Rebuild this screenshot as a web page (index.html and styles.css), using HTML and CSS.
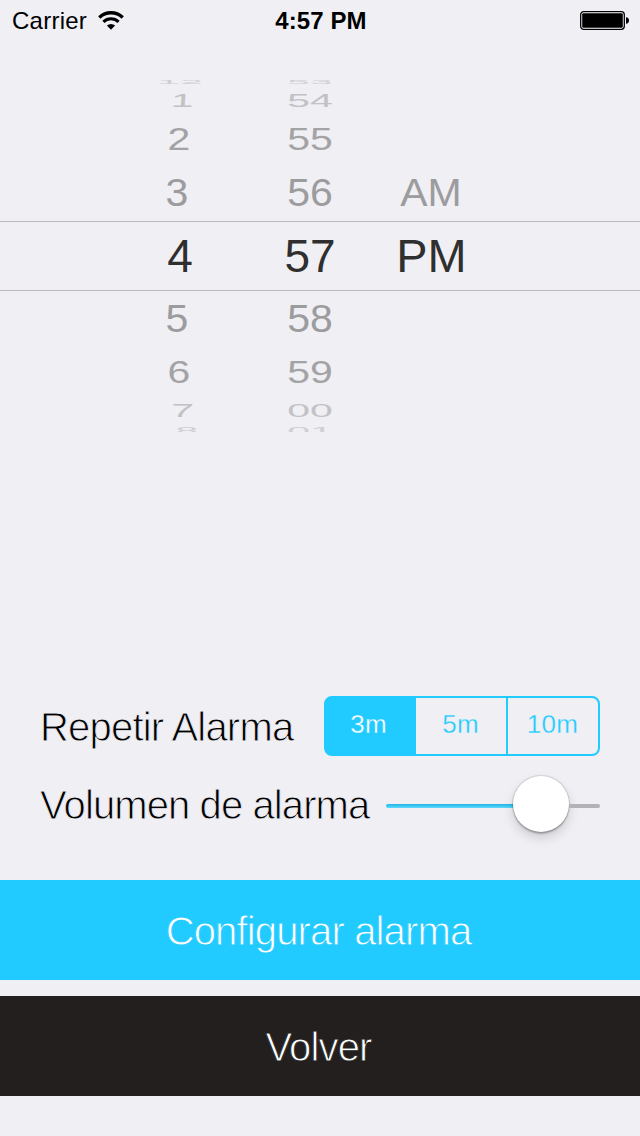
FILE: index.html
```html
<!DOCTYPE html>
<html lang="es">
  <head>
    <meta charset="UTF-8" />
    <meta name="viewport" content="width=device-width, initial-scale=1.0" />
    <title>Alarma</title>
    <link rel="stylesheet" href="styles.css">
  </head>
  <body>
    <header class="status-bar">
      <div class="carrier">
        <span>Carrier</span>
        <svg class="wifi" width="26" height="20" viewBox="0 0 26 20">
          <path d="M1.3 6.4a17 17 0 0 1 23.4 0" fill="none" stroke="#000" stroke-width="3.4" />
          <path d="M5.4 10.9a11 11 0 0 1 15.2 0" fill="none" stroke="#000" stroke-width="3" />
          <path d="M13 18.8L8.9 14.6a5.9 5.9 0 0 1 8.2 0z" />
        </svg>
      </div>
      <div class="clock">4:57 PM</div>
      <svg class="battery" width="50" height="20" viewBox="0 0 50 20">
        <rect x="0.7" y="0.7" width="43.6" height="17.6" rx="3" fill="#fff" stroke="#000" stroke-width="1.3" />
        <rect x="2.2" y="2.2" width="40.6" height="14.6" rx="1.2" />
        <path d="M46 6.2c4 0 4 6.6 0 6.6z" />
      </svg>
    </header>

    <main>
      <div class="picker">
        <div class="row far-top"><span>12</span><span>53</span><span></span></div>
        <div class="row third"><span>1</span><span>54</span><span></span></div>
        <div class="row second"><span>2</span><span>55</span><span></span></div>
        <div class="row first"><span>3</span><span>56</span><span>AM</span></div>
        <div class="row selected"><span>4</span><span>57</span><span>PM</span></div>
        <div class="row first below"><span>5</span><span>58</span><span></span></div>
        <div class="row second"><span>6</span><span>59</span><span></span></div>
        <div class="row third"><span>7</span><span>00</span><span></span></div>
        <div class="row far"><span>8</span><span>01</span><span></span></div>
      </div>

      <div class="settings">
        <div class="setting">
          <span class="label">Repetir Alarma</span>
          <div class="segmented">
            <button class="segment active">3m</button>
            <button class="segment">5m</button>
            <button class="segment">10m</button>
          </div>
        </div>
        <div class="setting">
          <span class="label volume-label">Volumen de alarma</span>
          <div class="slider">
            <div class="track-on"></div>
            <div class="knob"></div>
            <div class="track-off"></div>
          </div>
        </div>
      </div>

      <button class="action primary">Configurar alarma</button>
      <button class="action back">Volver</button>
    </main>
  </body>
</html>
```
FILE: styles.css
```css
body {
  margin: 0;
  height: 1136px;
  background-color: #efeff4;
  font-family: "Liberation Sans", Arial, sans-serif;
  color: #000;
  overflow: hidden;
}
button {
  margin: 0;
  padding: 0;
  border: none;
  font-family: inherit;
  cursor: pointer;
}
.status-bar {
  box-sizing: border-box;
  display: grid;
  grid-template-columns: 1fr auto 1fr;
  align-items: center;
  height: 40px;
  padding: 2px 10px 0 12px;
  font-size: 24px;
  line-height: 38px;
}
.carrier {
  display: flex;
  align-items: center;
  gap: 11px;
  letter-spacing: 0.25px;
}
.clock {
  font-weight: bold;
  letter-spacing: 0.1px;
}
.battery {
  justify-self: end;
}
/* time wheel */
.picker {
  height: 352px;
  margin-top: 40px;
  overflow: hidden;
}
.row {
  display: grid;
  grid-template-columns: 116px 144px 98px;
  justify-content: start;
  align-items: center;
  justify-items: center;
  padding-left: 122px;
  font-size: 41px;
  line-height: 46px;
  color: #9c9c9f;
}
.row span {
  min-height: 1px;
}
.selected {
  height: 68px;
  border-top: 1px solid #b9b9be;
  border-bottom: 1px solid #b9b9be;
  font-size: 46px;
  color: #2f2f2f;
}
.selected span:last-child {
  transform: scaleX(1.02);
}
.first {
  height: 55px;
}
.first span {
  transform: translate(0, -1px) scaleY(0.95);
}
.first span:first-child {
  transform: translate(-3px, -1px) scaleY(0.95);
}
.below span {
  transform: scaleY(0.95);
}
.below span:first-child {
  transform: translateX(-3px) scaleY(0.95);
}
.second {
  height: 53px;
  color: #a3a3a6;
}
.second span {
  transform: translateY(-1px) scaleY(0.76);
}
.second span:first-child {
  transform: translate(-1px, -1px) scaleY(0.76);
}
.third {
  height: 24px;
  color: #c2c2c6;
}
.third span {
  transform: scaleY(0.46);
}
.third span:first-child {
  transform: translateX(2px) skewX(-4deg) scaleY(0.46);
}
.far,
.far-top {
  height: 9px;
  color: #cfcfd3;
}
.far span {
  transform: translateY(3px) scaleY(0.26);
}
.far span:first-child {
  transform: translate(7px, 3px) scaleY(0.26);
}
.far-top span {
  transform: translateY(-3px) scaleY(0.15);
}
/* repeat and volume */
.settings {
  padding: 264px 40px 0;
}
.setting {
  display: flex;
  justify-content: space-between;
  align-items: center;
  height: 60px;
  margin-bottom: 20px;
}
/* the outline in the background colour thins the letters */
.label {
  padding-top: 2px;
  font-size: 40px;
  letter-spacing: -0.8px;
  white-space: nowrap;
  -webkit-text-stroke: 0.9px #efeff4;
}
.volume-label {
  padding: 0 0 2px;
  letter-spacing: -0.9px;
}
.segmented {
  box-sizing: border-box;
  display: grid;
  grid-template-columns: 90px 92px 90px;
  width: 276px;
  height: 60px;
  border: 2px solid #21cbff;
  border-radius: 8px;
  background-color: #21cbff;
  overflow: hidden;
}
.segment {
  background-color: #efeff4;
  color: #21cbff;
  font-size: 26px;
  letter-spacing: 0.3px;
  padding: 0 1px 4px 0;
  -webkit-text-stroke: 0.3px #efeff4;
}
.segment:nth-child(2) {
  border-right: 2px solid #21cbff;
}
.segment.active {
  padding-right: 5px;
  background-color: #21cbff;
  color: #fff;
  -webkit-text-stroke: 0.3px #21cbff;
}
.slider {
  display: flex;
  align-items: center;
  width: 214px;
}
.track-on {
  width: 127px;
  height: 4px;
  border-radius: 2px 0 0 2px;
  background: linear-gradient(#20b4e4, #5fd9ff);
}
.knob {
  width: 56px;
  height: 56px;
  margin-bottom: 4px;
  border-radius: 50%;
  background-color: #fff;
  box-shadow: 0 0 1px 1px rgba(0, 0, 0, 0.12), 0 2px 2px rgba(0, 0, 0, 0.22), 0 6px 12px rgba(0, 0, 0, 0.14);
}
.track-off {
  flex: 1;
  height: 4px;
  border-radius: 0 2px 2px 0;
  background-color: #b3b3b5;
}
.action {
  display: block;
  width: 100%;
  height: 100px;
  padding: 2px 3px 0 0;
  color: #fff;
  font-size: 40px;
  letter-spacing: -0.85px;
}
.primary {
  margin-top: 44px;
  background-color: #21cbff;
  -webkit-text-stroke: 0.9px #21cbff;
}
.back {
  margin-top: 16px;
  background-color: #231f1e;
  -webkit-text-stroke: 0.9px #231f1e;
}
```
